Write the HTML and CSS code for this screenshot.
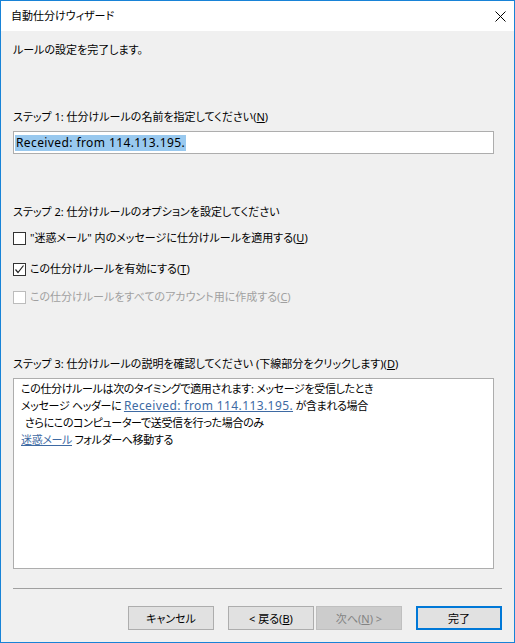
FILE: index.html
```html
<!DOCTYPE html>
<html lang="ja">
<head>
<meta charset="utf-8">
<title>自動仕分けウィザード</title>
<link rel="stylesheet" href="styles.css">
</head>
<body>
<div class="window">
  <div class="titlebar">
    <span class="title">自動仕分けウィザード</span>
    <svg class="close" width="11" height="11" viewBox="0 0 11 11"><path d="M0.5 0.5 L10.5 10.5 M10.5 0.5 L0.5 10.5" stroke="#000" stroke-width="1" fill="none"/></svg>
  </div>
  <div class="content">
    <p class="text intro">ルールの設定を完了します。</p>
    <p class="text step1">ステップ 1: 仕分けルールの名前を指定してください(<u>N</u>)</p>
    <div class="input"><span class="sel en">Received: from 114.113.195.</span></div>
    <p class="text step2">ステップ 2: 仕分けルールのオプションを設定してください</p>
    <div class="check cb1"><span class="box"></span><span>"迷惑メール" 内のメッセージに仕分けルールを適用する(<u>U</u>)</span></div>
    <div class="check cb2"><span class="box"><svg width="11" height="11" viewBox="0 0 11 11"><path d="M1.5 5.5 L4 8.5 L9.5 1.5" stroke="#222" stroke-width="1.2" fill="none"/></svg></span><span>この仕分けルールを有効にする(<u>T</u>)</span></div>
    <div class="check cb3 disabled"><span class="box"></span><span>この仕分けルールをすべてのアカウント用に作成する(<u>C</u>)</span></div>
    <p class="text step3">ステップ 3: 仕分けルールの説明を確認してください (下線部分をクリックします)(<u>D</u>)</p>
    <div class="desc">
      <div class="line">この仕分けルールは次のタイミングで適用されます: メッセージを受信したとき</div>
      <div class="line">メッセージ ヘッダーに <a class="link en">Received: from 114.113.195.</a> が含まれる場合</div>
      <div class="line indent">さらにこのコンピューターで送受信を行った場合のみ</div>
      <div class="line"><a class="link">迷惑メール</a> フォルダーへ移動する</div>
    </div>
    <div class="sep"></div>
    <div class="buttons">
      <div class="btn cancel">キャンセル</div>
      <div class="btn back">&lt; 戻る(<u>B</u>)</div>
      <div class="btn next disabled">次へ(<u>N</u>) &gt;</div>
      <div class="btn finish">完了</div>
    </div>
  </div>
</div>
</body>
</html>
```

FILE: styles.css
```css
html, body {
  margin: 0;
  padding: 0;
  background: #f0f0f0;
}
body {
  font-family: "Noto Sans", "Noto Sans CJK JP", sans-serif;
  font-size: 11px;
  font-feature-settings: "palt";
  color: #000;
}
.en {
  font-size: 12px;
  letter-spacing: 0.4px;
}
.window {
  width: 515px;
  height: 643px;
  box-sizing: border-box;
  border: 1px solid #1883d7;
  background: #f0f0f0;
  display: flex;
  flex-direction: column;
}
.titlebar {
  height: 30px;
  background: #fff;
  display: flex;
  align-items: center;
  justify-content: space-between;
  padding-left: 10px;
}
.title {
  line-height: 16px;
}
.close {
  margin-right: 8px;
  display: block;
}
.content {
  padding: 0 12px;
  display: flex;
  flex-direction: column;
}
.text {
  margin: 0;
  line-height: 16px;
  height: 16px;
  white-space: nowrap;
}
.intro { margin-top: 11px; }
.step1 { margin-top: 51px; }
.input {
  margin-top: 6px;
  height: 23px;
  width: 481px;
  box-sizing: border-box;
  border: 1px solid #adadad;
  background: #fff;
  display: flex;
  align-items: center;
  padding-left: 1px;
}
.sel {
  background: #99c9ef;
  line-height: 16px;
  padding: 0 1px;
}
.step2 { margin-top: 50px; }
.check {
  display: flex;
  align-items: center;
  height: 16px;
  line-height: 16px;
  white-space: nowrap;
}
.box {
  width: 13px;
  height: 13px;
  box-sizing: border-box;
  border: 1px solid #333;
  background: #fff;
  margin-right: 4px;
  display: flex;
  align-items: center;
  justify-content: center;
}
.box svg { display: block; }
.cb1 { margin-top: 10px; }
.cb2 { margin-top: 15px; }
.cb3 { margin-top: 12px; }
.check.disabled { color: #a0a0a0; }
.check.disabled .box { border-color: #bcbcbc; }
.step3 { margin-top: 51px; }
.desc {
  margin-top: 6px;
  width: 481px;
  height: 191px;
  box-sizing: border-box;
  border: 1px solid #adadad;
  background: #fff;
  padding: 1px 7px;
}
.line {
  line-height: 17px;
  height: 17px;
  white-space: nowrap;
  letter-spacing: -0.35px;
}
.line .en {
  letter-spacing: 0.4px;
}
.indent { padding-left: 4px; }
.link {
  color: #3e6aa3;
  text-decoration: underline;
}
.sep {
  margin-top: 19px;
  height: 1px;
  background: #a0a0a0;
}
.buttons {
  margin-top: 17px;
  display: flex;
  justify-content: flex-end;
}
.btn {
  width: 86px;
  height: 24px;
  box-sizing: border-box;
  border: 1px solid #adadad;
  background: #e1e1e1;
  display: flex;
  align-items: center;
  justify-content: center;
  white-space: nowrap;
}
.back { margin-left: 14px; }
.next { margin-left: 2px; }
.finish {
  margin-left: 14px;
  border: 2px solid #0078d7;
}
.btn.disabled {
  background: #cccccc;
  border-color: #bfbfbf;
  color: #838383;
}
```
